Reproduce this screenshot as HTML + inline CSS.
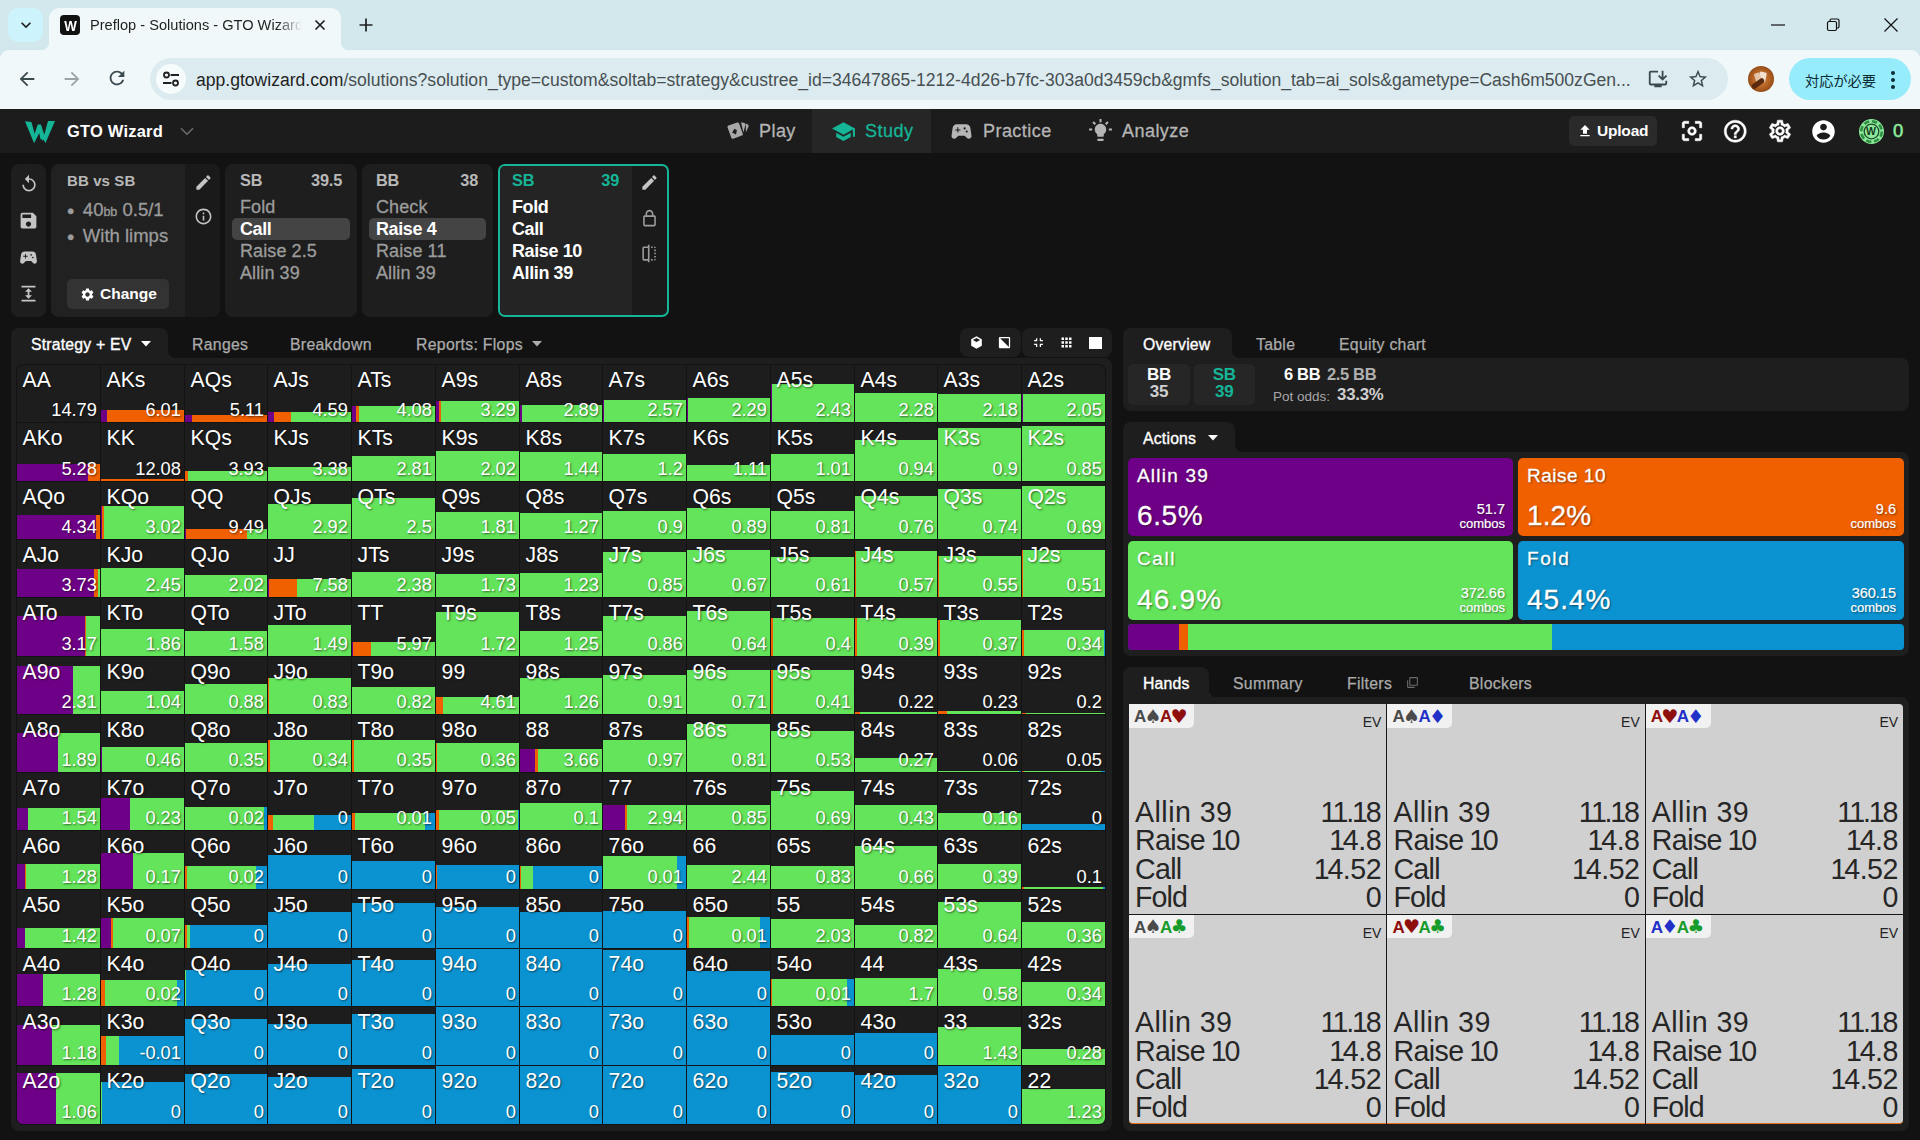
<!DOCTYPE html>
<html lang="en"><head><meta charset="utf-8"><title>Preflop - Solutions - GTO Wizard</title>
<style>
*{box-sizing:border-box;margin:0;padding:0}
html,body{width:1920px;height:1140px;overflow:hidden;background:#121212;font-family:"Liberation Sans","Noto Sans CJK JP",sans-serif;color:#fff}
.abs{position:absolute}
svg{display:block}
.t{position:absolute;white-space:nowrap;line-height:1}
.b{font-weight:700}
#chrome{position:absolute;left:0;top:0;width:1920px;height:109px;background:#d3e8ed}
#nav{position:absolute;left:0;top:109px;width:1920px;height:44px;background:#1c1c1c}
.card{position:absolute;background:#1e1e1e;border-radius:8px}
.g{position:absolute;width:82.8px;height:57.5px;background:#1d1d1d;overflow:hidden}
.g i{position:absolute;bottom:0;display:block}
.g b{position:absolute;left:5.6px;top:4.2px;font-weight:400;font-size:21.2px;line-height:22px;letter-spacing:0;color:#fff;text-shadow:1px 1px 2px rgba(0,0,0,.55)}
.g u{position:absolute;right:3.2px;bottom:2.6px;text-decoration:none;font-size:18.3px;line-height:19px;color:#fff;text-shadow:1px 1px 2px rgba(0,0,0,.55);letter-spacing:-.05px}
.act{position:absolute;border-radius:5px}
.act .n{position:absolute;left:9px;top:8px;font-size:19px;line-height:20px;letter-spacing:.6px;-webkit-text-stroke:.3px #fff;text-shadow:1px 1px 2px rgba(0,0,0,.5)}
.act .p{position:absolute;left:9px;bottom:6px;font-size:28px;line-height:28px;letter-spacing:.1px;-webkit-text-stroke:.3px #fff;text-shadow:1px 1px 2px rgba(0,0,0,.5)}
.act .c{position:absolute;right:8px;bottom:5px;font-size:13px;line-height:14px;text-align:right;-webkit-text-stroke:.2px #fff;text-shadow:1px 1px 2px rgba(0,0,0,.5)}
.act .c span{font-size:14.5px;line-height:16px;display:block}
.hc{position:absolute;width:257.4px;height:209.5px;background:#d0d0d0;color:#161616}
.hc .lab{position:absolute;left:0;top:0;width:65px;height:23.5px;background:#f1f1f1;border-bottom-right-radius:5px;font-weight:700;font-size:17px;line-height:23px;padding-left:5px;white-space:nowrap;letter-spacing:-.3px}
.hc .lab em{font-style:normal;font-weight:400;font-family:"DejaVu Sans",sans-serif;font-size:19px;letter-spacing:-1.5px;margin-left:-1.5px;position:relative;top:.5px}
.hc .ev{position:absolute;right:5px;top:10px;font-size:14px;line-height:16px;color:#222}
.hc .rows{position:absolute;left:6px;right:5.3px;bottom:1.3px;font-size:28.6px;line-height:28.3px;color:#262626;letter-spacing:0}
.hc .rows .o{margin:0 -1.7px}
.hc .rows .v{letter-spacing:-.5px}
.hc .rows div{display:flex;justify-content:space-between;white-space:nowrap}
</style></head><body>

<div id="chrome">
<div class="abs" style="left:8px;top:8px;width:35px;height:34px;border-radius:10px;background:#cdf4fc"></div>
<div class="abs" style="left:15.5px;top:15.0px;width:20px;height:20px"><svg width="20" height="20" viewBox="0 0 24 24" fill="#1f1f1f" ><path d="M16.59 8.59L12 13.17 7.41 8.59 6 10l6 6 6-6z"/></svg></div>
<div class="abs" style="left:49px;top:8px;width:292px;height:42px;border-radius:10px 10px 0 0;background:#f1f8fa"></div>
<div class="abs" style="left:41px;top:42px;width:8px;height:8px;background:radial-gradient(circle at 0 0,transparent 8px,#f1f8fa 8.5px)"></div>
<div class="abs" style="left:341px;top:42px;width:8px;height:8px;background:radial-gradient(circle at 100% 0,transparent 8px,#f1f8fa 8.5px)"></div>
<div class="abs" style="left:60px;top:15px;width:20px;height:20px;border-radius:4px;background:#111"></div>
<div class="t b" style="left:63.5px;top:18.5px;font-size:14px;color:#fff;letter-spacing:-.5px;transform:scaleX(.95)">W</div>
<div class="t" style="left:90px;top:18px;font-size:14.6px;color:#1f1f1f;width:212px;overflow:hidden;-webkit-mask-image:linear-gradient(90deg,#000 88%,transparent)">Preflop - Solutions - GTO Wizard</div>
<svg class="abs" style="left:313px;top:18px" width="14" height="14" viewBox="0 0 14 14"><path d="M2.500 2.500l9 9M11.500 2.500l-9 9" stroke="#1f1f1f" stroke-width="1.700" fill="none"/></svg>
<svg class="abs" style="left:358px;top:17px" width="16" height="16" viewBox="0 0 16 16"><path d="M8 1.500v13M1.500 8h13" stroke="#1f1f1f" stroke-width="1.700" fill="none"/></svg>
<svg class="abs" style="left:1770px;top:17px" width="16" height="16" viewBox="0 0 16 16"><path d="M1 8h14" stroke="#111" stroke-width="1.200"/></svg>
<svg class="abs" style="left:1825px;top:17px" width="16" height="16" viewBox="0 0 16 16"><rect x="2.500" y="4.500" width="9" height="9" rx="1.500" fill="none" stroke="#111" stroke-width="1.200"/><path d="M5 4.500V3.500a1.500 1.500 0 0 1 1.500-1.500h6a1.500 1.500 0 0 1 1.500 1.500v6a1.500 1.500 0 0 1-1.500 1.500h-1" fill="none" stroke="#111" stroke-width="1.200"/></svg>
<svg class="abs" style="left:1883px;top:17px" width="16" height="16" viewBox="0 0 16 16"><path d="M1.500 1.500l13 13M14.500 1.500l-13 13" stroke="#111" stroke-width="1.200"/></svg>
<div class="abs" style="left:0;top:50px;width:1920px;height:59px;background:#f1f8fa;border-radius:9px 9px 0 0"></div>
<div class="abs" style="left:16.0px;top:68.0px;width:22px;height:22px"><svg width="22" height="22" viewBox="0 0 24 24" fill="#3b4a4f" ><path d="M20 11H7.83l5.59-5.59L12 4l-8 8 8 8 1.41-1.41L7.83 13H20v-2z"/></svg></div>
<div class="abs" style="left:61.0px;top:68.0px;width:22px;height:22px"><svg width="22" height="22" viewBox="0 0 24 24" fill="#9aa3a6" ><path d="M12 4l-1.41 1.41L16.17 11H4v2h12.17l-5.58 5.59L12 20l8-8z"/></svg></div>
<div class="abs" style="left:106.0px;top:67.0px;width:22px;height:22px"><svg width="22" height="22" viewBox="0 0 24 24" fill="#3b4a4f" ><path d="M17.65 6.35C16.2 4.9 14.21 4 12 4c-4.42 0-7.99 3.58-7.99 8s3.57 8 7.99 8c3.73 0 6.84-2.55 7.73-6h-2.08c-.82 2.33-3.04 4-5.65 4-3.31 0-6-2.69-6-6s2.69-6 6-6c1.66 0 3.14.69 4.22 1.78L13 11h7V4l-2.35 2.35z"/></svg></div>
<div class="abs" style="left:150px;top:58px;width:1578px;height:42px;border-radius:21px;background:#dcebef"></div>
<div class="abs" style="left:156px;top:64px;width:30px;height:30px;border-radius:15px;background:#f6fbfc"></div>
<svg class="abs" style="left:161px;top:69px" width="20" height="20" viewBox="0 0 20 20" fill="none" stroke="#222" stroke-width="1.800"><path d="M9.500 6h8.500M2 14h8.500"/><circle cx="5.500" cy="6" r="2.500"/><circle cx="14.500" cy="14" r="2.500"/></svg>
<div class="t" style="left:196px;top:71.5px;font-size:17.57px;color:#1f1f1f" id="url">app.gtowizard.com<span style="color:#474f52">/solutions?solution_type=custom&amp;soltab=strategy&amp;custree_id=34647865-1212-4d26-b7fc-303a0d3459cb&amp;gmfs_solution_tab=ai_sols&amp;gametype=Cash6m500zGen...</span></div>
<div class="abs" style="left:1647.0px;top:68.0px;width:22px;height:22px"><svg width="22" height="22" viewBox="0 0 24 24" fill="#3b4a4f" ><path d="M20 17H4V5h8V3H4c-1.1 0-2 .9-2 2v12c0 1.1.9 2 2 2h4v2h8v-2h4c1.1 0 2-.9 2-2v-3h-2v3zM17 14l5-5-1.410-1.410L18 10.170V3h-2v7.170l-2.590-2.580L12 9z"/></svg></div>
<div class="abs" style="left:1687.0px;top:68.0px;width:22px;height:22px"><svg width="22" height="22" viewBox="0 0 24 24" fill="#3b4a4f" ><path d="M22 9.24l-7.19-.62L12 2 9.19 8.63 2 9.24l5.46 4.73L5.82 21 12 17.27 18.18 21l-1.63-7.03L22 9.24zM12 15.4l-3.76 2.27 1-4.28-3.32-2.88 4.38-.38L12 6.1l1.71 4.04 4.38.38-3.32 2.88 1 4.28L12 15.4z"/></svg></div>
<div class="abs" style="left:1748px;top:66px;width:26px;height:26px;border-radius:13px;background:radial-gradient(circle at 50% 50%,#d98a45 0,#b05e20 50%,#6b3512 100%);overflow:hidden"><div class="abs" style="left:11px;top:6px;width:7px;height:10px;background:#f3e1cf;border-radius:1px;transform:rotate(12deg)"></div><div class="abs" style="left:7px;top:7px;width:6px;height:9px;background:#e2c3a6;border-radius:1px;transform:rotate(-18deg)"></div><div class="abs" style="left:3px;top:15px;width:14px;height:5px;background:#5a2a0e;border-radius:2px;transform:rotate(-35deg)"></div></div>
<div class="abs" style="left:1789px;top:58px;width:122px;height:42px;border-radius:21px;background:#97ecfc"></div>
<div class="t" style="left:1805px;top:73.500px;font-size:14.2px;color:#0b2b33">対応が必要</div>
<svg class="abs" style="left:1889.500px;top:69px" width="6" height="22" viewBox="0 0 6 22" fill="#0b2b33"><circle cx="3" cy="4" r="2"/><circle cx="3" cy="11" r="2"/><circle cx="3" cy="18" r="2"/></svg>
</div>
<div id="nav">
<svg class="abs" style="left:25px;top:11.500px" width="30" height="23" viewBox="0 0 30 23"><path d="M0 .3L6.400 1l3.300 11.800L12.700 3.400h3.200l3.400 10.400L23 0h7L20.400 22.300l-1.600-3.600-1.300 1-.6-1.800-1.200.8-1.500-6.400L9.100 22.300z" fill="#15b597"/></svg>
<div class="t b" style="left:67px;top:14px;font-size:16.5px;color:#fff;letter-spacing:.2px">GTO Wizard</div>
<svg class="abs" style="left:179.500px;top:18px" width="14" height="9" viewBox="0 0 14 9"><path d="M1 1.200l6 6 6-6" fill="none" stroke="#6c6c6c" stroke-width="1.600"/></svg>
<div class="abs" style="left:812px;top:0;width:119px;height:44px;background:#262626"></div>
<div class="abs" style="left:726.0px;top:9.0px;width:24px;height:24px"><svg width="24" height="24" viewBox="0 0 24 24" fill="#a8a8a8" ><path d="M2.5 7.600l8.700-3.100c.8-.3 1.600.1 1.900.9l3.700 10.300c.3.8-.1 1.600-.9 1.900l-8.700 3.100c-.8.300-1.600-.1-1.900-.9L1.600 9.500c-.3-.8.100-1.600.9-1.900zm6 3.200l-2.400 3.800 3.900 2 .9-4.300zM15 4.200l3.300.9c.8.2 1.300 1 1.100 1.900l-2 7.600zM19.800 5.600l2 .9c.7.300 1 1.200.7 1.900l-2.600 6z"/></svg></div>
<div class="t" style="left:759px;top:13px;font-size:18px;color:#b5b5b5;letter-spacing:.45px;-webkit-text-stroke:.3px #b5b5b5">Play</div>
<div class="abs" style="left:830.5px;top:9.5px;width:25px;height:25px"><svg width="25" height="25" viewBox="0 0 24 24" fill="#15b597" ><path d="M5 13.18v4L12 21l7-3.82v-4L12 17l-7-3.82zM12 3L1 9l11 6 9-4.91V17h2V9L12 3z"/></svg></div>
<div class="t" style="left:865px;top:13px;font-size:18px;color:#15b597;font-weight:500;-webkit-text-stroke:.3px #15b597;letter-spacing:.5px">Study</div>
<div class="abs" style="left:949.0px;top:9.5px;width:25px;height:25px"><svg width="25" height="25" viewBox="0 0 24 24" fill="#b5b5b5" ><path d="M21.58 16.09l-1.09-7.66C20.21 6.46 18.52 5 16.53 5H7.47C5.48 5 3.79 6.46 3.51 8.43l-1.09 7.66C2.2 17.63 3.39 19 4.94 19c.68 0 1.32-.27 1.8-.75L9 16h6l2.25 2.25c.48.48 1.13.75 1.8.75 1.56 0 2.75-1.37 2.53-2.91zM11 11H9v2H8v-2H6v-1h2V8h1v2h2v1zm4-1c-.55 0-1-.45-1-1s.45-1 1-1 1 .45 1 1-.45 1-1 1zm2 3c-.55 0-1-.45-1-1s.45-1 1-1 1 .45 1 1-.45 1-1 1z"/></svg></div>
<div class="t" style="left:983px;top:13px;font-size:18px;color:#b5b5b5;letter-spacing:.45px;-webkit-text-stroke:.3px #b5b5b5">Practice</div>
<div class="abs" style="left:1088.0px;top:8.5px;width:25px;height:25px"><svg width="25" height="25" viewBox="0 0 24 24" fill="#b5b5b5" ><path d="M9 21c0 .55.45 1 1 1h4c.55 0 1-.45 1-1v-1H9v1zM12 5.5c-3.04 0-5.5 2.46-5.5 5.5 0 1.87.93 3.51 2.36 4.5V17c0 .55.45 1 1 1h4.28c.55 0 1-.45 1-1v-1.5c1.43-.99 2.36-2.63 2.36-4.5 0-3.04-2.46-5.5-5.5-5.5zM11 1h2v3h-2zM1 10h3v2H1zM20 10h3v2h-3zM4.2 4.6l1.4-1.4 2.1 2.1-1.4 1.4zM16.3 5.3l2.1-2.1 1.4 1.4-2.1 2.1z"/></svg></div>
<div class="t" style="left:1122px;top:13px;font-size:18px;color:#b5b5b5;letter-spacing:.45px;-webkit-text-stroke:.3px #b5b5b5">Analyze</div>
<div class="abs" style="left:1569px;top:7px;width:88px;height:30px;border-radius:5px;background:#2a2a2a"></div>
<div class="abs" style="left:1576.5px;top:13.5px;width:16px;height:16px"><svg width="16" height="16" viewBox="0 0 24 24" fill="#fff" ><path d="M9 16h6v-6h4l-7-7-7 7h4zm-4 2h14v2H5z"/></svg></div>
<div class="t b" style="left:1597px;top:14px;font-size:15.5px;color:#fff;letter-spacing:-.2px">Upload</div>
<div class="abs" style="left:1678.5px;top:9.0px;width:26px;height:26px"><svg width="26" height="26" viewBox="0 0 24 24" fill="#fff" stroke="#fff" stroke-width="0.5"><path d="M5 15H3v4c0 1.1.9 2 2 2h4v-2H5v-4zM5 5h4V3H5c-1.1 0-2 .9-2 2v4h2V5zm14-2h-4v2h4v4h2V5c0-1.1-.9-2-2-2zm0 16h-4v2h4c1.1 0 2-.9 2-2v-4h-2v4zM12 8c-2.21 0-4 1.79-4 4s1.79 4 4 4 4-1.79 4-4-1.79-4-4-4zm0 6c-1.1 0-2-.9-2-2s.9-2 2-2 2 .9 2 2-.9 2-2 2z"/></svg></div>
<div class="abs" style="left:1722.2px;top:8.8px;width:26.5px;height:26.5px"><svg width="26.5" height="26.5" viewBox="0 0 24 24" fill="#fff" stroke="#fff" stroke-width="0.4"><path d="M11 18h2v-2h-2v2zm1-16C6.48 2 2 6.48 2 12s4.48 10 10 10 10-4.48 10-10S17.52 2 12 2zm0 18c-4.41 0-8-3.59-8-8s3.59-8 8-8 8 3.59 8 8-3.59 8-8 8zm0-14c-2.21 0-4 1.79-4 4h2c0-1.1.9-2 2-2s2 .9 2 2c0 2-3 1.75-3 5h2c0-2.25 3-2.5 3-5 0-2.21-1.79-4-4-4z"/></svg></div>
<div class="abs" style="left:1766.5px;top:9.0px;width:26px;height:26px"><svg width="26" height="26" viewBox="0 0 24 24" fill="#fff" stroke="#fff" stroke-width="0.5"><path d="M19.43 12.98c.04-.32.07-.64.07-.98 0-.34-.03-.66-.07-.98l2.11-1.65c.19-.15.24-.42.12-.64l-2-3.46c-.09-.16-.26-.25-.44-.25-.06 0-.12.01-.17.03l-2.49 1c-.52-.4-1.08-.73-1.69-.98l-.38-2.65C14.46 2.18 14.25 2 14 2h-4c-.25 0-.46.18-.49.42l-.38 2.65c-.61.25-1.17.59-1.69.98l-2.49-1c-.06-.02-.12-.03-.18-.03-.17 0-.34.09-.43.25l-2 3.46c-.13.22-.07.49.12.64l2.11 1.65c-.04.32-.07.65-.07.98 0 .33.03.66.07.98l-2.11 1.65c-.19.15-.24.42-.12.64l2 3.46c.09.16.26.25.44.25.06 0 .12-.01.17-.03l2.49-1c.52.4 1.08.73 1.69.98l.38 2.65c.03.24.24.42.49.42h4c.25 0 .46-.18.49-.42l.38-2.65c.61-.25 1.17-.59 1.69-.98l2.49 1c.06.02.12.03.18.03.17 0 .34-.09.43-.25l2-3.46c.12-.22.07-.49-.12-.64l-2.11-1.65zm-1.98-1.71c.04.31.05.52.05.73 0 .21-.02.43-.05.73l-.14 1.13.89.7 1.08.84-.7 1.21-1.27-.51-1.04-.42-.9.68c-.43.32-.84.56-1.25.73l-1.06.43-.16 1.13-.2 1.35h-1.4l-.19-1.35-.16-1.13-1.06-.43c-.43-.18-.83-.41-1.23-.71l-.91-.7-1.06.43-1.27.51-.7-1.21 1.08-.84.89-.7-.14-1.13c-.03-.31-.05-.54-.05-.74s.02-.43.05-.73l.14-1.13-.89-.7-1.08-.84.7-1.21 1.27.51 1.04.42.9-.68c.43-.32.84-.56 1.25-.73l1.06-.43.16-1.13.2-1.35h1.39l.19 1.35.16 1.13 1.06.43c.43.18.83.41 1.23.71l.91.7 1.06-.43 1.27-.51.7 1.21-1.07.85-.89.7.14 1.13zM12 8c-2.21 0-4 1.79-4 4s1.79 4 4 4 4-1.79 4-4-1.79-4-4-4zm0 6c-1.1 0-2-.9-2-2s.9-2 2-2 2 .9 2 2-.9 2-2 2z"/></svg></div>
<div class="abs" style="left:1810.0px;top:8.5px;width:27px;height:27px"><svg width="27" height="27" viewBox="0 0 24 24" fill="#fff" ><path d="M12 2C6.48 2 2 6.48 2 12s4.48 10 10 10 10-4.48 10-10S17.52 2 12 2zm0 3c1.66 0 3 1.34 3 3s-1.34 3-3 3-3-1.34-3-3 1.34-3 3-3zm0 14.2c-2.5 0-4.71-1.28-6-3.22.03-1.99 4-3.08 6-3.08 1.99 0 5.97 1.09 6 3.08-1.29 1.94-3.5 3.22-6 3.22z"/></svg></div>
<svg class="abs" style="left:1857.500px;top:8.500px" width="27" height="27" viewBox="0 0 27 27"><circle cx="13.500" cy="13.500" r="12.500" fill="#8fe99c"/><circle cx="13.500" cy="13.500" r="10.300" fill="none" stroke="#2f8f43" stroke-width="2.600" stroke-dasharray="5.400 2.700"/><circle cx="13.500" cy="13.500" r="7.300" fill="#8fe99c" stroke="#1c4a27" stroke-width="1.300"/></svg>
<div class="t b" style="left:1866px;top:17px;font-size:10.5px;color:#143a1e;letter-spacing:-.3px">W</div>
<div class="t" style="left:1893px;top:13px;font-size:18.5px;color:#8fee9f;-webkit-text-stroke:.5px #8fee9f">0</div>
</div>
<div class="card" style="left:11px;top:164px;width:35px;height:153px"></div>
<div class="abs" style="left:18.5px;top:174.0px;width:20px;height:20px"><svg width="20" height="20" viewBox="0 0 24 24" fill="#c4c4c4" ><path d="M12 5V1L7 6l5 5V7c3.31 0 6 2.69 6 6s-2.69 6-6 6-6-2.69-6-6H4c0 4.42 3.58 8 8 8s8-3.58 8-8-3.58-8-8-8z"/></svg></div>
<div class="abs" style="left:18.0px;top:209.5px;width:21px;height:21px"><svg width="21" height="21" viewBox="0 0 24 24" fill="#c4c4c4" ><path d="M17 3H5c-1.11 0-2 .9-2 2v14c0 1.1.89 2 2 2h14c1.1 0 2-.9 2-2V7l-4-4zm-5 16c-1.66 0-3-1.34-3-3s1.34-3 3-3 3 1.34 3 3-1.34 3-3 3zm3-10H5V5h10v4z"/></svg></div>
<div class="abs" style="left:18.0px;top:246.5px;width:21px;height:21px"><svg width="21" height="21" viewBox="0 0 24 24" fill="#c4c4c4" ><path d="M21.58 16.09l-1.09-7.66C20.21 6.46 18.52 5 16.53 5H7.47C5.48 5 3.79 6.46 3.51 8.43l-1.09 7.66C2.2 17.63 3.39 19 4.94 19c.68 0 1.32-.27 1.8-.75L9 16h6l2.25 2.25c.48.48 1.13.75 1.8.75 1.56 0 2.75-1.37 2.53-2.91zM11 11H9v2H8v-2H6v-1h2V8h1v2h2v1zm4-1c-.55 0-1-.45-1-1s.45-1 1-1 1 .45 1 1-.45 1-1 1zm2 3c-.55 0-1-.45-1-1s.45-1 1-1 1 .45 1 1-.45 1-1 1z"/></svg></div>
<div class="abs" style="left:18.0px;top:282.5px;width:21px;height:21px"><svg width="21" height="21" viewBox="0 0 24 24" fill="#c4c4c4" ><path d="M4 3h16v2H4zM4 19h16v2H4zM12 6l-4 4h3v4H8l4 4 4-4h-3v-4h3z"/></svg></div>
<div class="card" style="left:51px;top:164px;width:169px;height:153px;background:#1a1a1a"></div>
<div class="card" style="left:51px;top:164px;width:134px;height:153px;background:#212121;border-radius:8px 0 0 8px"></div>
<div class="t b" style="left:67px;top:173px;font-size:15px;color:#b8b8b8;letter-spacing:.1px">BB vs SB</div>
<div class="t" style="left:67px;top:201px;font-size:18.5px;color:#9c9c9c;-webkit-text-stroke:.3px #9c9c9c"><span style="font-size:21px;line-height:10px;position:relative;top:1.5px">•</span>&nbsp;<span style="font-size:12px"> </span>40<span style="font-size:12.5px">bb</span> 0.5/1</div>
<div class="t" style="left:67px;top:227px;font-size:18.5px;color:#9c9c9c;-webkit-text-stroke:.3px #9c9c9c"><span style="font-size:21px;line-height:10px;position:relative;top:1.5px">•</span>&nbsp;<span style="font-size:12px"> </span>With limps</div>
<div class="abs" style="left:67px;top:279px;width:102px;height:30px;border-radius:5px;background:#333"></div>
<div class="abs" style="left:79.5px;top:286.5px;width:15px;height:15px"><svg width="15" height="15" viewBox="0 0 24 24" fill="#fff" ><path d="M19.14 12.94c.04-.3.06-.61.06-.94 0-.32-.02-.64-.07-.94l2.03-1.58c.18-.14.23-.41.12-.61l-1.92-3.32c-.12-.22-.37-.29-.59-.22l-2.39.96c-.5-.38-1.03-.7-1.62-.94l-.36-2.54c-.04-.24-.24-.41-.48-.41h-3.84c-.24 0-.43.17-.47.41l-.36 2.54c-.59.24-1.13.57-1.62.94l-2.39-.96c-.22-.08-.47 0-.59.22L2.74 8.87c-.12.21-.08.47.12.61l2.03 1.58c-.05.3-.09.63-.09.94s.02.64.07.94l-2.03 1.58c-.18.14-.23.41-.12.61l1.92 3.32c.12.22.37.29.59.22l2.39-.96c.5.38 1.03.7 1.62.94l.36 2.54c.05.24.24.41.48.41h3.84c.24 0 .44-.17.47-.41l.36-2.54c.59-.24 1.13-.56 1.62-.94l2.39.96c.22.08.47 0 .59-.22l1.92-3.32c.12-.22.07-.47-.12-.61l-2.01-1.58zM12 15.6c-1.98 0-3.6-1.62-3.6-3.6s1.62-3.6 3.6-3.6 3.6 1.62 3.6 3.6-1.62 3.6-3.6 3.6z"/></svg></div>
<div class="t b" style="left:100px;top:286px;font-size:15.5px;color:#fff">Change</div>
<div class="abs" style="left:193.5px;top:173.0px;width:19px;height:19px"><svg width="19" height="19" viewBox="0 0 24 24" fill="#c4c4c4" ><path d="M3 17.25V21h3.75L17.81 9.94l-3.75-3.75L3 17.25zM20.71 7.04c.39-.39.39-1.02 0-1.41l-2.34-2.34c-.39-.39-1.02-.39-1.41 0l-1.83 1.83 3.75 3.75 1.83-1.83z"/></svg></div>
<div class="abs" style="left:193.5px;top:206.5px;width:19px;height:19px"><svg width="19" height="19" viewBox="0 0 24 24" fill="#c4c4c4" ><path d="M11 7h2v2h-2zm0 4h2v6h-2zm1-9C6.48 2 2 6.48 2 12s4.48 10 10 10 10-4.48 10-10S17.52 2 12 2zm0 18c-4.41 0-8-3.59-8-8s3.59-8 8-8 8 3.59 8 8-3.59 8-8 8z"/></svg></div>
<div class="card" style="left:225px;top:164px;width:132px;height:153px"></div>
<div class="t b" style="left:240px;top:172px;font-size:16.3px;color:#b8b8b8;letter-spacing:-.2px">SB</div>
<div class="t b" style="right:1578px;top:172px;font-size:16.3px;color:#b8b8b8;letter-spacing:-.2px">39.5</div>
<div class="t" style="left:240px;top:198px;font-size:18px;color:#9c9c9c;-webkit-text-stroke:.3px #9c9c9c;letter-spacing:.1px">Fold</div>
<div class="abs" style="left:232px;top:218px;width:118px;height:22px;border-radius:5px;background:#444"></div>
<div class="t b" style="left:240px;top:220px;font-size:18px;color:#fff;letter-spacing:-.4px">Call</div>
<div class="t" style="left:240px;top:242px;font-size:18px;color:#9c9c9c;-webkit-text-stroke:.3px #9c9c9c;letter-spacing:.1px">Raise 2.5</div>
<div class="t" style="left:240px;top:264px;font-size:18px;color:#9c9c9c;-webkit-text-stroke:.3px #9c9c9c;letter-spacing:.1px">Allin 39</div>
<div class="card" style="left:362px;top:164px;width:131px;height:153px"></div>
<div class="t b" style="left:376px;top:172px;font-size:16.3px;color:#b8b8b8;letter-spacing:-.2px">BB</div>
<div class="t b" style="right:1442px;top:172px;font-size:16.3px;color:#b8b8b8;letter-spacing:-.2px">38</div>
<div class="t" style="left:376px;top:198px;font-size:18px;color:#9c9c9c;-webkit-text-stroke:.3px #9c9c9c;letter-spacing:.1px">Check</div>
<div class="abs" style="left:369px;top:218px;width:117px;height:22px;border-radius:5px;background:#444"></div>
<div class="t b" style="left:376px;top:220px;font-size:18px;color:#fff;letter-spacing:-.4px">Raise 4</div>
<div class="t" style="left:376px;top:242px;font-size:18px;color:#9c9c9c;-webkit-text-stroke:.3px #9c9c9c;letter-spacing:.1px">Raise 11</div>
<div class="t" style="left:376px;top:264px;font-size:18px;color:#9c9c9c;-webkit-text-stroke:.3px #9c9c9c;letter-spacing:.1px">Allin 39</div>
<div class="abs" style="left:498px;top:164px;width:171px;height:153px;border:2px solid #15b597;border-radius:7px;background:#1a1a1a"></div>
<div class="abs" style="left:500px;top:166px;width:132px;height:149px;background:#242424;border-radius:5px 0 0 5px"></div>
<div class="t b" style="left:512px;top:172px;font-size:16.3px;letter-spacing:-.2px;color:#15b597">SB</div>
<div class="t b" style="right:1301px;top:172px;font-size:16.3px;letter-spacing:-.2px;color:#15b597">39</div>
<div class="t b" style="left:512px;top:198px;font-size:18px;color:#fff;letter-spacing:-.4px">Fold</div>
<div class="t b" style="left:512px;top:220px;font-size:18px;color:#fff;letter-spacing:-.4px">Call</div>
<div class="t b" style="left:512px;top:242px;font-size:18px;color:#fff;letter-spacing:-.4px">Raise 10</div>
<div class="t b" style="left:512px;top:264px;font-size:18px;color:#fff;letter-spacing:-.4px">Allin 39</div>
<div class="abs" style="left:640.0px;top:173.0px;width:19px;height:19px"><svg width="19" height="19" viewBox="0 0 24 24" fill="#c4c4c4" ><path d="M3 17.25V21h3.75L17.81 9.94l-3.75-3.75L3 17.25zM20.71 7.04c.39-.39.39-1.02 0-1.41l-2.34-2.34c-.39-.39-1.02-.39-1.41 0l-1.83 1.83 3.75 3.75 1.83-1.83z"/></svg></div>
<div class="abs" style="left:640.0px;top:208.5px;width:19px;height:19px"><svg width="19" height="19" viewBox="0 0 24 24" fill="#9c9c9c" ><path d="M18 8h-1V6c0-2.76-2.24-5-5-5S7 3.24 7 6v2H6c-1.1 0-2 .9-2 2v10c0 1.1.9 2 2 2h12c1.1 0 2-.9 2-2V10c0-1.1-.9-2-2-2zM9 6c0-1.66 1.34-3 3-3s3 1.34 3 3v2H9V6zm9 14H6V10h12v10z"/></svg></div>
<div class="abs" style="left:640.0px;top:244.0px;width:19px;height:19px"><svg width="19" height="19" viewBox="0 0 24 24" fill="#9c9c9c" ><path d="M10 3H5c-1.1 0-2 .9-2 2v14c0 1.1.9 2 2 2h5v2h2V1h-2v2zm0 16H5V5h5v14zM14 3h2v2h-2zM14 19h2v2h-2zM18 3v2h2c0-1.1-.9-2-2-2zM18 19v2c1.1 0 2-.9 2-2h-2zM18 7h2v2h-2zM18 11h2v2h-2zM18 15h2v2h-2z"/></svg></div>
<div class="abs" style="left:11px;top:328px;width:157px;height:32px;background:#1e1e1e;border-radius:8px 8px 0 0"></div>
<div class="abs" style="left:168px;top:350px;width:8px;height:8px;background:radial-gradient(circle at 100% 0,transparent 8px,#1e1e1e 8.5px)"></div>
<div class="t" style="left:31px;top:336px;font-size:15.8px;color:#fff;-webkit-text-stroke:.35px #fff;letter-spacing:.2px;margin-top:1.3px">Strategy + EV</div>
<svg class="abs" style="left:141px;top:341px" width="10" height="6" viewBox="0 0 10 6"><path d="M0 0h10L5 5.500z" fill="#fff"/></svg>
<div class="t" style="left:192px;top:336px;font-size:15.8px;color:#ababab;-webkit-text-stroke:.25px #ababab;letter-spacing:.3px;margin-top:1.3px">Ranges</div>
<div class="t" style="left:290px;top:336px;font-size:15.8px;color:#ababab;-webkit-text-stroke:.25px #ababab;letter-spacing:.3px;margin-top:1.3px">Breakdown</div>
<div class="t" style="left:416px;top:336px;font-size:15.8px;color:#ababab;-webkit-text-stroke:.25px #ababab;letter-spacing:.3px;margin-top:1.3px">Reports: Flops</div>
<svg class="abs" style="left:532px;top:341px" width="10" height="6" viewBox="0 0 10 6"><path d="M0 0h10L5 5.500z" fill="#ababab"/></svg>
<div class="abs" style="left:960px;top:328px;width:61px;height:29px;border-radius:8px;background:#1e1e1e"></div>
<div class="abs" style="left:1022px;top:328px;width:90px;height:29px;border-radius:8px;background:#1e1e1e"></div>
<div class="abs" style="left:968.5px;top:335.0px;width:15px;height:15px"><svg width="15" height="15" viewBox="0 0 24 24" fill="#fff" ><path d="M12 2L3.5 6.8v10.4L12 22l8.500-4.8V6.800zM12 4.600l5.700 3.200L12 11 6.300 7.800z"/></svg></div>
<div class="abs" style="left:996.5px;top:335.0px;width:15px;height:15px"><svg width="15" height="15" viewBox="0 0 24 24" fill="#fff" ><path d="M19 3H5c-1.1 0-2 .9-2 2v14c0 1.1.9 2 2 2h14c1.1 0 2-.9 2-2V5c0-1.1-.9-2-2-2zm0 16L5 5h14v14z"/></svg></div>
<div class="abs" style="left:1031.0px;top:335.0px;width:15px;height:15px"><svg width="15" height="15" viewBox="0 0 24 24" fill="#fff" ><path d="M5 16h3v3h2v-5H5v2zm3-8H5v2h5V5H8v3zm6 11h2v-3h3v-2h-5v5zm2-11V5h-2v5h5V8h-3z"/></svg></div>
<div class="abs" style="left:1059.0px;top:335.0px;width:15px;height:15px"><svg width="15" height="15" viewBox="0 0 24 24" fill="#fff" ><path d="M4 8h4V4H4v4zm6 12h4v-4h-4v4zm-6 0h4v-4H4v4zm0-6h4v-4H4v4zm6 0h4v-4h-4v4zm6-10v4h4V4h-4zm-6 4h4V4h-4v4zm6 6h4v-4h-4v4zm0 6h4v-4h-4v4z"/></svg></div>
<div class="abs" style="left:1089px;top:336.500px;width:12.500px;height:12.500px;background:#fff"></div>
<div class="abs" style="left:11px;top:358px;width:1100.5px;height:772.5px;background:#1e1e1e;border-radius:0 8px 8px 8px"></div>
<div class="abs" style="left:16px;top:364px;width:1090px;height:761px;background:#131313;border-radius:7px"></div>
<div class="g" style="left:17px;top:365px;width:83px;height:57px;border-top-left-radius:6px;"><b>AA</b><u>14.79</u></div>
<div class="g" style="left:101px;top:365px;width:83px;height:57px;"><i style="left:0.00%;width:7.05%;height:12.0px;background:#6e0087"></i><i style="left:7.00%;width:93.05%;height:12.0px;background:#f06000"></i><b>AKs</b><u>6.01</u></div>
<div class="g" style="left:185px;top:365px;width:82px;height:57px;"><i style="left:0.00%;width:8.05%;height:7.0px;background:#6e0087"></i><i style="left:8.00%;width:92.05%;height:7.0px;background:#f06000"></i><b>AQs</b><u>5.11</u></div>
<div class="g" style="left:268px;top:365px;width:83px;height:57px;"><i style="left:0.00%;width:7.05%;height:10.0px;background:#6e0087"></i><i style="left:7.00%;width:21.05%;height:10.0px;background:#f06000"></i><i style="left:28.00%;width:72.05%;height:10.0px;background:#64e45a"></i><b>AJs</b><u>4.59</u></div>
<div class="g" style="left:352px;top:365px;width:83px;height:57px;"><i style="left:0.00%;width:5.05%;height:16.0px;background:#6e0087"></i><i style="left:5.00%;width:3.05%;height:16.0px;background:#f06000"></i><i style="left:8.00%;width:92.05%;height:16.0px;background:#64e45a"></i><b>ATs</b><u>4.08</u></div>
<div class="g" style="left:436px;top:365px;width:83px;height:57px;"><i style="left:0.00%;width:3.55%;height:21.0px;background:#6e0087"></i><i style="left:3.50%;width:2.55%;height:21.0px;background:#f06000"></i><i style="left:6.00%;width:94.05%;height:21.0px;background:#64e45a"></i><b>A9s</b><u>3.29</u></div>
<div class="g" style="left:520px;top:365px;width:82px;height:57px;"><i style="left:0.00%;width:2.05%;height:17.5px;background:#6e0087"></i><i style="left:2.00%;width:98.05%;height:17.5px;background:#64e45a"></i><b>A8s</b><u>2.89</u></div>
<div class="g" style="left:603px;top:365px;width:83px;height:57px;"><i style="left:0.00%;width:1.05%;height:22.0px;background:#6e0087"></i><i style="left:1.00%;width:99.05%;height:22.0px;background:#64e45a"></i><b>A7s</b><u>2.57</u></div>
<div class="g" style="left:687px;top:365px;width:83px;height:57px;"><i style="left:0.00%;width:0.75%;height:24.0px;background:#6e0087"></i><i style="left:0.70%;width:99.35%;height:24.0px;background:#64e45a"></i><b>A6s</b><u>2.29</u></div>
<div class="g" style="left:771px;top:365px;width:83px;height:57px;"><i style="left:0.00%;width:0.75%;height:38.0px;background:#6e0087"></i><i style="left:0.70%;width:99.35%;height:38.0px;background:#64e45a"></i><b>A5s</b><u>2.43</u></div>
<div class="g" style="left:855px;top:365px;width:82px;height:57px;"><i style="left:0.00%;width:0.55%;height:29.0px;background:#6e0087"></i><i style="left:0.50%;width:99.55%;height:29.0px;background:#64e45a"></i><b>A4s</b><u>2.28</u></div>
<div class="g" style="left:938px;top:365px;width:83px;height:57px;"><i style="left:0.00%;width:0.55%;height:28.0px;background:#6e0087"></i><i style="left:0.50%;width:99.55%;height:28.0px;background:#64e45a"></i><b>A3s</b><u>2.18</u></div>
<div class="g" style="left:1022px;top:365px;width:83px;height:57px;border-top-right-radius:6px;"><i style="left:0.00%;width:0.75%;height:28.0px;background:#6e0087"></i><i style="left:0.70%;width:99.35%;height:28.0px;background:#64e45a"></i><b>A2s</b><u>2.05</u></div>
<div class="g" style="left:17px;top:423px;width:83px;height:58px;"><i style="left:0.00%;width:85.05%;height:17.0px;background:#6e0087"></i><i style="left:85.00%;width:15.05%;height:17.0px;background:#f06000"></i><b>AKo</b><u>5.28</u></div>
<div class="g" style="left:101px;top:423px;width:83px;height:58px;"><i style="left:0.00%;width:100.05%;height:2.0px;background:#f06000"></i><b>KK</b><u>12.08</u></div>
<div class="g" style="left:185px;top:423px;width:82px;height:58px;"><i style="left:0.00%;width:4.05%;height:10.0px;background:#f06000"></i><i style="left:4.00%;width:96.05%;height:10.0px;background:#64e45a"></i><b>KQs</b><u>3.93</u></div>
<div class="g" style="left:268px;top:423px;width:83px;height:58px;"><i style="left:0.00%;width:100.05%;height:14.0px;background:#64e45a"></i><b>KJs</b><u>3.38</u></div>
<div class="g" style="left:352px;top:423px;width:83px;height:58px;"><i style="left:0.00%;width:100.05%;height:25.0px;background:#64e45a"></i><b>KTs</b><u>2.81</u></div>
<div class="g" style="left:436px;top:423px;width:83px;height:58px;"><i style="left:0.00%;width:100.05%;height:30.5px;background:#64e45a"></i><b>K9s</b><u>2.02</u></div>
<div class="g" style="left:520px;top:423px;width:82px;height:58px;"><i style="left:0.00%;width:100.05%;height:29.0px;background:#64e45a"></i><b>K8s</b><u>1.44</u></div>
<div class="g" style="left:603px;top:423px;width:83px;height:58px;"><i style="left:0.00%;width:100.05%;height:27.0px;background:#64e45a"></i><b>K7s</b><u>1.2</u></div>
<div class="g" style="left:687px;top:423px;width:83px;height:58px;"><i style="left:0.00%;width:100.05%;height:16.0px;background:#64e45a"></i><b>K6s</b><u>1.11</u></div>
<div class="g" style="left:771px;top:423px;width:83px;height:58px;"><i style="left:0.00%;width:100.05%;height:27.0px;background:#64e45a"></i><b>K5s</b><u>1.01</u></div>
<div class="g" style="left:855px;top:423px;width:82px;height:58px;"><i style="left:0.00%;width:100.05%;height:41.0px;background:#64e45a"></i><b>K4s</b><u>0.94</u></div>
<div class="g" style="left:938px;top:423px;width:83px;height:58px;"><i style="left:0.00%;width:100.05%;height:53.0px;background:#64e45a"></i><b>K3s</b><u>0.9</u></div>
<div class="g" style="left:1022px;top:423px;width:83px;height:58px;"><i style="left:0.00%;width:100.05%;height:55.0px;background:#64e45a"></i><b>K2s</b><u>0.85</u></div>
<div class="g" style="left:17px;top:482px;width:83px;height:57px;"><i style="left:0.00%;width:95.05%;height:24.0px;background:#6e0087"></i><i style="left:95.00%;width:5.05%;height:24.0px;background:#f06000"></i><b>AQo</b><u>4.34</u></div>
<div class="g" style="left:101px;top:482px;width:83px;height:57px;"><i style="left:0.00%;width:1.05%;height:33.0px;background:#6e0087"></i><i style="left:1.00%;width:2.55%;height:33.0px;background:#f06000"></i><i style="left:3.50%;width:96.55%;height:33.0px;background:#64e45a"></i><b>KQo</b><u>3.02</u></div>
<div class="g" style="left:185px;top:482px;width:82px;height:57px;"><i style="left:0.00%;width:1.05%;height:10.0px;background:#6e0087"></i><i style="left:1.00%;width:75.05%;height:10.0px;background:#f06000"></i><i style="left:76.00%;width:24.05%;height:10.0px;background:#64e45a"></i><b>QQ</b><u>9.49</u></div>
<div class="g" style="left:268px;top:482px;width:83px;height:57px;"><i style="left:0.00%;width:100.05%;height:35.0px;background:#64e45a"></i><b>QJs</b><u>2.92</u></div>
<div class="g" style="left:352px;top:482px;width:83px;height:57px;"><i style="left:0.00%;width:100.05%;height:41.0px;background:#64e45a"></i><b>QTs</b><u>2.5</u></div>
<div class="g" style="left:436px;top:482px;width:83px;height:57px;"><i style="left:0.00%;width:100.05%;height:27.0px;background:#64e45a"></i><b>Q9s</b><u>1.81</u></div>
<div class="g" style="left:520px;top:482px;width:82px;height:57px;"><i style="left:0.00%;width:100.05%;height:26.0px;background:#64e45a"></i><b>Q8s</b><u>1.27</u></div>
<div class="g" style="left:603px;top:482px;width:83px;height:57px;"><i style="left:0.00%;width:100.05%;height:28.0px;background:#64e45a"></i><b>Q7s</b><u>0.9</u></div>
<div class="g" style="left:687px;top:482px;width:83px;height:57px;"><i style="left:0.00%;width:100.05%;height:31.0px;background:#64e45a"></i><b>Q6s</b><u>0.89</u></div>
<div class="g" style="left:771px;top:482px;width:83px;height:57px;"><i style="left:0.00%;width:100.05%;height:28.0px;background:#64e45a"></i><b>Q5s</b><u>0.81</u></div>
<div class="g" style="left:855px;top:482px;width:82px;height:57px;"><i style="left:0.00%;width:100.05%;height:43.0px;background:#64e45a"></i><b>Q4s</b><u>0.76</u></div>
<div class="g" style="left:938px;top:482px;width:83px;height:57px;"><i style="left:0.00%;width:100.05%;height:50.5px;background:#64e45a"></i><b>Q3s</b><u>0.74</u></div>
<div class="g" style="left:1022px;top:482px;width:83px;height:57px;"><i style="left:0.00%;width:100.05%;height:53.0px;background:#64e45a"></i><b>Q2s</b><u>0.69</u></div>
<div class="g" style="left:17px;top:540px;width:83px;height:57px;"><i style="left:0.00%;width:93.05%;height:28.0px;background:#6e0087"></i><i style="left:93.00%;width:4.05%;height:28.0px;background:#f06000"></i><i style="left:97.00%;width:3.05%;height:28.0px;background:#64e45a"></i><b>AJo</b><u>3.73</u></div>
<div class="g" style="left:101px;top:540px;width:83px;height:57px;"><i style="left:0.00%;width:100.05%;height:29.0px;background:#64e45a"></i><b>KJo</b><u>2.45</u></div>
<div class="g" style="left:185px;top:540px;width:82px;height:57px;"><i style="left:0.00%;width:100.05%;height:22.0px;background:#64e45a"></i><b>QJo</b><u>2.02</u></div>
<div class="g" style="left:268px;top:540px;width:83px;height:57px;"><i style="left:0.00%;width:1.05%;height:18.0px;background:#6e0087"></i><i style="left:1.00%;width:34.05%;height:18.0px;background:#f06000"></i><i style="left:35.00%;width:65.05%;height:18.0px;background:#64e45a"></i><b>JJ</b><u>7.58</u></div>
<div class="g" style="left:352px;top:540px;width:83px;height:57px;"><i style="left:0.00%;width:100.05%;height:25.0px;background:#64e45a"></i><b>JTs</b><u>2.38</u></div>
<div class="g" style="left:436px;top:540px;width:83px;height:57px;"><i style="left:0.00%;width:100.05%;height:23.0px;background:#64e45a"></i><b>J9s</b><u>1.73</u></div>
<div class="g" style="left:520px;top:540px;width:82px;height:57px;"><i style="left:0.00%;width:100.05%;height:24.0px;background:#64e45a"></i><b>J8s</b><u>1.23</u></div>
<div class="g" style="left:603px;top:540px;width:83px;height:57px;"><i style="left:0.00%;width:100.05%;height:45.0px;background:#64e45a"></i><b>J7s</b><u>0.85</u></div>
<div class="g" style="left:687px;top:540px;width:83px;height:57px;"><i style="left:0.00%;width:100.05%;height:47.0px;background:#64e45a"></i><b>J6s</b><u>0.67</u></div>
<div class="g" style="left:771px;top:540px;width:83px;height:57px;"><i style="left:0.00%;width:100.05%;height:40.0px;background:#64e45a"></i><b>J5s</b><u>0.61</u></div>
<div class="g" style="left:855px;top:540px;width:82px;height:57px;"><i style="left:0.00%;width:1.05%;height:46.0px;background:#f06000"></i><i style="left:1.00%;width:99.05%;height:46.0px;background:#64e45a"></i><b>J4s</b><u>0.57</u></div>
<div class="g" style="left:938px;top:540px;width:83px;height:57px;"><i style="left:0.00%;width:1.05%;height:41.0px;background:#f06000"></i><i style="left:1.00%;width:99.05%;height:41.0px;background:#64e45a"></i><b>J3s</b><u>0.55</u></div>
<div class="g" style="left:1022px;top:540px;width:83px;height:57px;"><i style="left:0.00%;width:1.05%;height:47.0px;background:#f06000"></i><i style="left:1.00%;width:99.05%;height:47.0px;background:#64e45a"></i><b>J2s</b><u>0.51</u></div>
<div class="g" style="left:17px;top:598px;width:83px;height:58px;"><i style="left:0.00%;width:82.05%;height:40.0px;background:#6e0087"></i><i style="left:82.00%;width:1.55%;height:40.0px;background:#f06000"></i><i style="left:83.50%;width:16.55%;height:40.0px;background:#64e45a"></i><b>ATo</b><u>3.17</u></div>
<div class="g" style="left:101px;top:598px;width:83px;height:58px;"><i style="left:0.00%;width:100.05%;height:27.0px;background:#64e45a"></i><b>KTo</b><u>1.86</u></div>
<div class="g" style="left:185px;top:598px;width:82px;height:58px;"><i style="left:0.00%;width:100.05%;height:25.0px;background:#64e45a"></i><b>QTo</b><u>1.58</u></div>
<div class="g" style="left:268px;top:598px;width:83px;height:58px;"><i style="left:0.00%;width:100.05%;height:31.0px;background:#64e45a"></i><b>JTo</b><u>1.49</u></div>
<div class="g" style="left:352px;top:598px;width:83px;height:58px;"><i style="left:0.00%;width:1.55%;height:14.0px;background:#6e0087"></i><i style="left:1.50%;width:21.05%;height:14.0px;background:#f06000"></i><i style="left:22.50%;width:77.55%;height:14.0px;background:#64e45a"></i><b>TT</b><u>5.97</u></div>
<div class="g" style="left:436px;top:598px;width:83px;height:58px;"><i style="left:0.00%;width:100.05%;height:44.0px;background:#64e45a"></i><b>T9s</b><u>1.72</u></div>
<div class="g" style="left:520px;top:598px;width:82px;height:58px;"><i style="left:0.00%;width:100.05%;height:25.0px;background:#64e45a"></i><b>T8s</b><u>1.25</u></div>
<div class="g" style="left:603px;top:598px;width:83px;height:58px;"><i style="left:0.00%;width:100.05%;height:40.0px;background:#64e45a"></i><b>T7s</b><u>0.86</u></div>
<div class="g" style="left:687px;top:598px;width:83px;height:58px;"><i style="left:0.00%;width:100.05%;height:45.0px;background:#64e45a"></i><b>T6s</b><u>0.64</u></div>
<div class="g" style="left:771px;top:598px;width:83px;height:58px;"><i style="left:0.00%;width:2.05%;height:38.0px;background:#f06000"></i><i style="left:2.00%;width:98.05%;height:38.0px;background:#64e45a"></i><b>T5s</b><u>0.4</u></div>
<div class="g" style="left:855px;top:598px;width:82px;height:58px;"><i style="left:0.00%;width:2.55%;height:38.0px;background:#f06000"></i><i style="left:2.50%;width:97.55%;height:38.0px;background:#64e45a"></i><b>T4s</b><u>0.39</u></div>
<div class="g" style="left:938px;top:598px;width:83px;height:58px;"><i style="left:0.00%;width:3.05%;height:36.0px;background:#f06000"></i><i style="left:3.00%;width:97.05%;height:36.0px;background:#64e45a"></i><b>T3s</b><u>0.37</u></div>
<div class="g" style="left:1022px;top:598px;width:83px;height:58px;"><i style="left:0.00%;width:2.05%;height:26.0px;background:#f06000"></i><i style="left:2.00%;width:97.05%;height:26.0px;background:#64e45a"></i><i style="left:99.00%;width:1.05%;height:26.0px;background:#0b93d1"></i><b>T2s</b><u>0.34</u></div>
<div class="g" style="left:17px;top:657px;width:83px;height:57px;"><i style="left:0.00%;width:67.05%;height:48.0px;background:#6e0087"></i><i style="left:67.00%;width:0.55%;height:48.0px;background:#f06000"></i><i style="left:67.50%;width:32.55%;height:48.0px;background:#64e45a"></i><b>A9o</b><u>2.31</u></div>
<div class="g" style="left:101px;top:657px;width:83px;height:57px;"><i style="left:0.00%;width:100.05%;height:23.0px;background:#64e45a"></i><b>K9o</b><u>1.04</u></div>
<div class="g" style="left:185px;top:657px;width:82px;height:57px;"><i style="left:0.00%;width:0.55%;height:30.0px;background:#f06000"></i><i style="left:0.50%;width:99.55%;height:30.0px;background:#64e45a"></i><b>Q9o</b><u>0.88</u></div>
<div class="g" style="left:268px;top:657px;width:83px;height:57px;"><i style="left:0.00%;width:1.05%;height:36.0px;background:#f06000"></i><i style="left:1.00%;width:99.05%;height:36.0px;background:#64e45a"></i><b>J9o</b><u>0.83</u></div>
<div class="g" style="left:352px;top:657px;width:83px;height:57px;"><i style="left:0.00%;width:100.05%;height:27.0px;background:#64e45a"></i><b>T9o</b><u>0.82</u></div>
<div class="g" style="left:436px;top:657px;width:83px;height:57px;"><i style="left:0.00%;width:8.05%;height:17.0px;background:#f06000"></i><i style="left:8.00%;width:92.05%;height:17.0px;background:#64e45a"></i><b>99</b><u>4.61</u></div>
<div class="g" style="left:520px;top:657px;width:82px;height:57px;"><i style="left:0.00%;width:100.05%;height:36.0px;background:#64e45a"></i><b>98s</b><u>1.26</u></div>
<div class="g" style="left:603px;top:657px;width:83px;height:57px;"><i style="left:0.00%;width:100.05%;height:39.0px;background:#64e45a"></i><b>97s</b><u>0.91</u></div>
<div class="g" style="left:687px;top:657px;width:83px;height:57px;"><i style="left:0.00%;width:100.05%;height:44.0px;background:#64e45a"></i><b>96s</b><u>0.71</u></div>
<div class="g" style="left:771px;top:657px;width:83px;height:57px;"><i style="left:0.00%;width:2.05%;height:44.0px;background:#f06000"></i><i style="left:2.00%;width:98.05%;height:44.0px;background:#64e45a"></i><b>95s</b><u>0.41</u></div>
<div class="g" style="left:855px;top:657px;width:82px;height:57px;"><i style="left:0.00%;width:6.05%;height:2.0px;background:#f06000"></i><i style="left:6.00%;width:94.05%;height:2.0px;background:#64e45a"></i><b>94s</b><u>0.22</u></div>
<div class="g" style="left:938px;top:657px;width:83px;height:57px;"><i style="left:0.00%;width:11.05%;height:3.0px;background:#f06000"></i><i style="left:11.00%;width:89.05%;height:3.0px;background:#64e45a"></i><b>93s</b><u>0.23</u></div>
<div class="g" style="left:1022px;top:657px;width:83px;height:57px;"><i style="left:0.00%;width:5.05%;height:1.0px;background:#f06000"></i><i style="left:5.00%;width:95.05%;height:1.0px;background:#64e45a"></i><b>92s</b><u>0.2</u></div>
<div class="g" style="left:17px;top:715px;width:83px;height:57px;"><i style="left:0.00%;width:49.05%;height:39.0px;background:#6e0087"></i><i style="left:49.00%;width:51.05%;height:39.0px;background:#64e45a"></i><b>A8o</b><u>1.89</u></div>
<div class="g" style="left:101px;top:715px;width:83px;height:57px;"><i style="left:0.00%;width:1.05%;height:25.0px;background:#6e0087"></i><i style="left:1.00%;width:99.05%;height:25.0px;background:#64e45a"></i><b>K8o</b><u>0.46</u></div>
<div class="g" style="left:185px;top:715px;width:82px;height:57px;"><i style="left:0.00%;width:0.55%;height:29.0px;background:#f06000"></i><i style="left:0.50%;width:99.55%;height:29.0px;background:#64e45a"></i><b>Q8o</b><u>0.35</u></div>
<div class="g" style="left:268px;top:715px;width:83px;height:57px;"><i style="left:0.00%;width:3.05%;height:32.0px;background:#f06000"></i><i style="left:3.00%;width:97.05%;height:32.0px;background:#64e45a"></i><b>J8o</b><u>0.34</u></div>
<div class="g" style="left:352px;top:715px;width:83px;height:57px;"><i style="left:0.00%;width:2.05%;height:32.0px;background:#f06000"></i><i style="left:2.00%;width:98.05%;height:32.0px;background:#64e45a"></i><b>T8o</b><u>0.35</u></div>
<div class="g" style="left:436px;top:715px;width:83px;height:57px;"><i style="left:0.00%;width:1.05%;height:29.0px;background:#f06000"></i><i style="left:1.00%;width:99.05%;height:29.0px;background:#64e45a"></i><b>98o</b><u>0.36</u></div>
<div class="g" style="left:520px;top:715px;width:82px;height:57px;"><i style="left:0.00%;width:18.05%;height:23.0px;background:#6e0087"></i><i style="left:18.00%;width:4.55%;height:23.0px;background:#f06000"></i><i style="left:22.50%;width:77.55%;height:23.0px;background:#64e45a"></i><b>88</b><u>3.66</u></div>
<div class="g" style="left:603px;top:715px;width:83px;height:57px;"><i style="left:0.00%;width:100.05%;height:32.0px;background:#64e45a"></i><b>87s</b><u>0.97</u></div>
<div class="g" style="left:687px;top:715px;width:83px;height:57px;"><i style="left:0.00%;width:100.05%;height:48.0px;background:#64e45a"></i><b>86s</b><u>0.81</u></div>
<div class="g" style="left:771px;top:715px;width:83px;height:57px;"><i style="left:0.00%;width:100.05%;height:41.0px;background:#64e45a"></i><b>85s</b><u>0.53</u></div>
<div class="g" style="left:855px;top:715px;width:82px;height:57px;"><i style="left:0.00%;width:100.05%;height:14.0px;background:#64e45a"></i><b>84s</b><u>0.27</u></div>
<div class="g" style="left:938px;top:715px;width:83px;height:57px;"><i style="left:0.00%;width:97.05%;height:1.0px;background:#64e45a"></i><i style="left:97.00%;width:3.05%;height:1.0px;background:#0b93d1"></i><b>83s</b><u>0.06</u></div>
<div class="g" style="left:1022px;top:715px;width:83px;height:57px;"><i style="left:0.00%;width:2.05%;height:1.0px;background:#f06000"></i><i style="left:2.00%;width:93.05%;height:1.0px;background:#64e45a"></i><i style="left:95.00%;width:5.05%;height:1.0px;background:#0b93d1"></i><b>82s</b><u>0.05</u></div>
<div class="g" style="left:17px;top:773px;width:83px;height:57px;"><i style="left:0.00%;width:13.05%;height:22.0px;background:#6e0087"></i><i style="left:13.00%;width:87.05%;height:22.0px;background:#64e45a"></i><b>A7o</b><u>1.54</u></div>
<div class="g" style="left:101px;top:773px;width:83px;height:57px;"><i style="left:0.00%;width:34.55%;height:32.0px;background:#6e0087"></i><i style="left:34.50%;width:65.55%;height:32.0px;background:#64e45a"></i><b>K7o</b><u>0.23</u></div>
<div class="g" style="left:185px;top:773px;width:82px;height:57px;"><i style="left:0.00%;width:96.05%;height:23.0px;background:#64e45a"></i><i style="left:96.00%;width:4.05%;height:23.0px;background:#0b93d1"></i><b>Q7o</b><u>0.02</u></div>
<div class="g" style="left:268px;top:773px;width:83px;height:57px;"><i style="left:0.00%;width:6.05%;height:15.0px;background:#f06000"></i><i style="left:6.00%;width:50.05%;height:15.0px;background:#64e45a"></i><i style="left:56.00%;width:44.05%;height:15.0px;background:#0b93d1"></i><b>J7o</b><u>0</u></div>
<div class="g" style="left:352px;top:773px;width:83px;height:57px;"><i style="left:0.00%;width:4.05%;height:17.0px;background:#f06000"></i><i style="left:4.00%;width:84.05%;height:17.0px;background:#64e45a"></i><i style="left:88.00%;width:12.05%;height:17.0px;background:#0b93d1"></i><b>T7o</b><u>0.01</u></div>
<div class="g" style="left:436px;top:773px;width:83px;height:57px;"><i style="left:0.00%;width:3.55%;height:20.0px;background:#f06000"></i><i style="left:3.50%;width:95.05%;height:20.0px;background:#64e45a"></i><i style="left:98.50%;width:1.55%;height:20.0px;background:#0b93d1"></i><b>97o</b><u>0.05</u></div>
<div class="g" style="left:520px;top:773px;width:82px;height:57px;"><i style="left:0.00%;width:100.05%;height:27.0px;background:#64e45a"></i><b>87o</b><u>0.1</u></div>
<div class="g" style="left:603px;top:773px;width:83px;height:57px;"><i style="left:0.00%;width:26.05%;height:25.0px;background:#6e0087"></i><i style="left:26.00%;width:3.55%;height:25.0px;background:#f06000"></i><i style="left:29.50%;width:70.55%;height:25.0px;background:#64e45a"></i><b>77</b><u>2.94</u></div>
<div class="g" style="left:687px;top:773px;width:83px;height:57px;"><i style="left:0.00%;width:100.05%;height:25.0px;background:#64e45a"></i><b>76s</b><u>0.85</u></div>
<div class="g" style="left:771px;top:773px;width:83px;height:57px;"><i style="left:0.00%;width:100.05%;height:39.0px;background:#64e45a"></i><b>75s</b><u>0.69</u></div>
<div class="g" style="left:855px;top:773px;width:82px;height:57px;"><i style="left:0.00%;width:100.05%;height:25.0px;background:#64e45a"></i><b>74s</b><u>0.43</u></div>
<div class="g" style="left:938px;top:773px;width:83px;height:57px;"><i style="left:0.00%;width:100.05%;height:17.0px;background:#64e45a"></i><b>73s</b><u>0.16</u></div>
<div class="g" style="left:1022px;top:773px;width:83px;height:57px;"><i style="left:0.00%;width:100.05%;height:6.0px;background:#0b93d1"></i><b>72s</b><u>0</u></div>
<div class="g" style="left:17px;top:831px;width:83px;height:58px;"><i style="left:0.00%;width:10.05%;height:25.0px;background:#6e0087"></i><i style="left:10.00%;width:1.05%;height:25.0px;background:#f06000"></i><i style="left:11.00%;width:89.05%;height:25.0px;background:#64e45a"></i><b>A6o</b><u>1.28</u></div>
<div class="g" style="left:101px;top:831px;width:83px;height:58px;"><i style="left:0.00%;width:38.05%;height:36.0px;background:#6e0087"></i><i style="left:38.00%;width:62.05%;height:36.0px;background:#64e45a"></i><b>K6o</b><u>0.17</u></div>
<div class="g" style="left:185px;top:831px;width:82px;height:58px;"><i style="left:0.00%;width:3.05%;height:23.0px;background:#f06000"></i><i style="left:3.00%;width:83.05%;height:23.0px;background:#64e45a"></i><i style="left:86.00%;width:14.05%;height:23.0px;background:#0b93d1"></i><b>Q6o</b><u>0.02</u></div>
<div class="g" style="left:268px;top:831px;width:83px;height:58px;"><i style="left:0.00%;width:0.55%;height:34.0px;background:#64e45a"></i><i style="left:0.50%;width:99.55%;height:34.0px;background:#0b93d1"></i><b>J6o</b><u>0</u></div>
<div class="g" style="left:352px;top:831px;width:83px;height:58px;"><i style="left:0.00%;width:100.05%;height:28.0px;background:#0b93d1"></i><b>T6o</b><u>0</u></div>
<div class="g" style="left:436px;top:831px;width:83px;height:58px;"><i style="left:0.00%;width:1.05%;height:24.0px;background:#f06000"></i><i style="left:1.00%;width:99.05%;height:24.0px;background:#0b93d1"></i><b>96o</b><u>0</u></div>
<div class="g" style="left:520px;top:831px;width:82px;height:58px;"><i style="left:0.00%;width:1.05%;height:23.0px;background:#f06000"></i><i style="left:1.00%;width:15.05%;height:23.0px;background:#64e45a"></i><i style="left:16.00%;width:84.05%;height:23.0px;background:#0b93d1"></i><b>86o</b><u>0</u></div>
<div class="g" style="left:603px;top:831px;width:83px;height:58px;"><i style="left:0.00%;width:0.55%;height:33.0px;background:#f06000"></i><i style="left:0.50%;width:88.55%;height:33.0px;background:#64e45a"></i><i style="left:89.00%;width:11.05%;height:33.0px;background:#0b93d1"></i><b>76o</b><u>0.01</u></div>
<div class="g" style="left:687px;top:831px;width:83px;height:58px;"><i style="left:0.00%;width:100.05%;height:24.0px;background:#64e45a"></i><b>66</b><u>2.44</u></div>
<div class="g" style="left:771px;top:831px;width:83px;height:58px;"><i style="left:0.00%;width:100.05%;height:23.0px;background:#64e45a"></i><b>65s</b><u>0.83</u></div>
<div class="g" style="left:855px;top:831px;width:82px;height:58px;"><i style="left:0.00%;width:100.05%;height:43.0px;background:#64e45a"></i><b>64s</b><u>0.66</u></div>
<div class="g" style="left:938px;top:831px;width:83px;height:58px;"><i style="left:0.00%;width:100.05%;height:25.0px;background:#64e45a"></i><b>63s</b><u>0.39</u></div>
<div class="g" style="left:1022px;top:831px;width:83px;height:58px;"><i style="left:0.00%;width:3.05%;height:2.5px;background:#f06000"></i><i style="left:3.00%;width:95.05%;height:2.5px;background:#64e45a"></i><i style="left:98.00%;width:2.05%;height:2.5px;background:#0b93d1"></i><b>62s</b><u>0.1</u></div>
<div class="g" style="left:17px;top:890px;width:83px;height:58px;"><i style="left:0.00%;width:10.05%;height:20.5px;background:#6e0087"></i><i style="left:10.00%;width:90.05%;height:20.5px;background:#64e45a"></i><b>A5o</b><u>1.42</u></div>
<div class="g" style="left:101px;top:890px;width:83px;height:58px;"><i style="left:0.00%;width:11.55%;height:30.5px;background:#6e0087"></i><i style="left:11.50%;width:2.55%;height:30.5px;background:#f06000"></i><i style="left:14.00%;width:86.05%;height:30.5px;background:#64e45a"></i><b>K5o</b><u>0.07</u></div>
<div class="g" style="left:185px;top:890px;width:82px;height:58px;"><i style="left:0.00%;width:2.05%;height:23.5px;background:#f06000"></i><i style="left:2.00%;width:3.55%;height:23.5px;background:#64e45a"></i><i style="left:5.50%;width:94.55%;height:23.5px;background:#0b93d1"></i><b>Q5o</b><u>0</u></div>
<div class="g" style="left:268px;top:890px;width:83px;height:58px;"><i style="left:0.00%;width:100.05%;height:36.5px;background:#0b93d1"></i><b>J5o</b><u>0</u></div>
<div class="g" style="left:352px;top:890px;width:83px;height:58px;"><i style="left:0.00%;width:100.05%;height:45.5px;background:#0b93d1"></i><b>T5o</b><u>0</u></div>
<div class="g" style="left:436px;top:890px;width:83px;height:58px;"><i style="left:0.00%;width:100.05%;height:41.5px;background:#0b93d1"></i><b>95o</b><u>0</u></div>
<div class="g" style="left:520px;top:890px;width:82px;height:58px;"><i style="left:0.00%;width:100.05%;height:36.5px;background:#0b93d1"></i><b>85o</b><u>0</u></div>
<div class="g" style="left:603px;top:890px;width:83px;height:58px;"><i style="left:0.00%;width:0.55%;height:37.5px;background:#64e45a"></i><i style="left:0.50%;width:99.55%;height:37.5px;background:#0b93d1"></i><b>75o</b><u>0</u></div>
<div class="g" style="left:687px;top:890px;width:83px;height:58px;"><i style="left:0.00%;width:2.05%;height:31.5px;background:#f06000"></i><i style="left:2.00%;width:86.05%;height:31.5px;background:#64e45a"></i><i style="left:88.00%;width:12.05%;height:31.5px;background:#0b93d1"></i><b>65o</b><u>0.01</u></div>
<div class="g" style="left:771px;top:890px;width:83px;height:58px;"><i style="left:0.00%;width:100.05%;height:29.5px;background:#64e45a"></i><b>55</b><u>2.03</u></div>
<div class="g" style="left:855px;top:890px;width:82px;height:58px;"><i style="left:0.00%;width:100.05%;height:23.5px;background:#64e45a"></i><b>54s</b><u>0.82</u></div>
<div class="g" style="left:938px;top:890px;width:83px;height:58px;"><i style="left:0.00%;width:100.05%;height:46.5px;background:#64e45a"></i><b>53s</b><u>0.64</u></div>
<div class="g" style="left:1022px;top:890px;width:83px;height:58px;"><i style="left:0.00%;width:100.05%;height:26.5px;background:#64e45a"></i><b>52s</b><u>0.36</u></div>
<div class="g" style="left:17px;top:949px;width:83px;height:57px;"><i style="left:0.00%;width:31.05%;height:32.0px;background:#6e0087"></i><i style="left:31.00%;width:69.05%;height:32.0px;background:#64e45a"></i><b>A4o</b><u>1.28</u></div>
<div class="g" style="left:101px;top:949px;width:83px;height:57px;"><i style="left:0.00%;width:4.55%;height:26.0px;background:#f06000"></i><i style="left:4.50%;width:87.55%;height:26.0px;background:#64e45a"></i><i style="left:92.00%;width:8.05%;height:26.0px;background:#0b93d1"></i><b>K4o</b><u>0.02</u></div>
<div class="g" style="left:185px;top:949px;width:82px;height:57px;"><i style="left:0.00%;width:0.55%;height:36.0px;background:#f06000"></i><i style="left:0.50%;width:0.55%;height:36.0px;background:#64e45a"></i><i style="left:1.00%;width:99.05%;height:36.0px;background:#0b93d1"></i><b>Q4o</b><u>0</u></div>
<div class="g" style="left:268px;top:949px;width:83px;height:57px;"><i style="left:0.00%;width:100.05%;height:42.0px;background:#0b93d1"></i><b>J4o</b><u>0</u></div>
<div class="g" style="left:352px;top:949px;width:83px;height:57px;"><i style="left:0.00%;width:100.05%;height:46.0px;background:#0b93d1"></i><b>T4o</b><u>0</u></div>
<div class="g" style="left:436px;top:949px;width:83px;height:57px;"><i style="left:0.00%;width:100.05%;height:57px;background:#0b93d1"></i><b>94o</b><u>0</u></div>
<div class="g" style="left:520px;top:949px;width:82px;height:57px;"><i style="left:0.00%;width:100.05%;height:57px;background:#0b93d1"></i><b>84o</b><u>0</u></div>
<div class="g" style="left:603px;top:949px;width:83px;height:57px;"><i style="left:0.00%;width:100.05%;height:56.0px;background:#0b93d1"></i><b>74o</b><u>0</u></div>
<div class="g" style="left:687px;top:949px;width:83px;height:57px;"><i style="left:0.00%;width:100.05%;height:35.0px;background:#0b93d1"></i><b>64o</b><u>0</u></div>
<div class="g" style="left:771px;top:949px;width:83px;height:57px;"><i style="left:0.00%;width:1.05%;height:27.0px;background:#f06000"></i><i style="left:1.00%;width:91.05%;height:27.0px;background:#64e45a"></i><i style="left:92.00%;width:8.05%;height:27.0px;background:#0b93d1"></i><b>54o</b><u>0.01</u></div>
<div class="g" style="left:855px;top:949px;width:82px;height:57px;"><i style="left:0.00%;width:100.05%;height:28.0px;background:#64e45a"></i><b>44</b><u>1.7</u></div>
<div class="g" style="left:938px;top:949px;width:83px;height:57px;"><i style="left:0.00%;width:100.05%;height:37.0px;background:#64e45a"></i><b>43s</b><u>0.58</u></div>
<div class="g" style="left:1022px;top:949px;width:83px;height:57px;"><i style="left:0.00%;width:100.05%;height:24.0px;background:#64e45a"></i><b>42s</b><u>0.34</u></div>
<div class="g" style="left:17px;top:1007px;width:83px;height:58px;"><i style="left:0.00%;width:42.05%;height:40.5px;background:#6e0087"></i><i style="left:42.00%;width:58.05%;height:40.5px;background:#64e45a"></i><b>A3o</b><u>1.18</u></div>
<div class="g" style="left:101px;top:1007px;width:83px;height:58px;"><i style="left:0.00%;width:5.55%;height:29.5px;background:#f06000"></i><i style="left:5.50%;width:16.55%;height:29.5px;background:#64e45a"></i><i style="left:22.00%;width:78.05%;height:29.5px;background:#0b93d1"></i><b>K3o</b><u>-0.01</u></div>
<div class="g" style="left:185px;top:1007px;width:82px;height:58px;"><i style="left:0.00%;width:100.05%;height:46.5px;background:#0b93d1"></i><b>Q3o</b><u>0</u></div>
<div class="g" style="left:268px;top:1007px;width:83px;height:58px;"><i style="left:0.00%;width:100.05%;height:41.5px;background:#0b93d1"></i><b>J3o</b><u>0</u></div>
<div class="g" style="left:352px;top:1007px;width:83px;height:58px;"><i style="left:0.00%;width:100.05%;height:51.5px;background:#0b93d1"></i><b>T3o</b><u>0</u></div>
<div class="g" style="left:436px;top:1007px;width:83px;height:58px;"><i style="left:0.00%;width:100.05%;height:58px;background:#0b93d1"></i><b>93o</b><u>0</u></div>
<div class="g" style="left:520px;top:1007px;width:82px;height:58px;"><i style="left:0.00%;width:100.05%;height:58px;background:#0b93d1"></i><b>83o</b><u>0</u></div>
<div class="g" style="left:603px;top:1007px;width:83px;height:58px;"><i style="left:0.00%;width:100.05%;height:58px;background:#0b93d1"></i><b>73o</b><u>0</u></div>
<div class="g" style="left:687px;top:1007px;width:83px;height:58px;"><i style="left:0.00%;width:100.05%;height:58px;background:#0b93d1"></i><b>63o</b><u>0</u></div>
<div class="g" style="left:771px;top:1007px;width:83px;height:58px;"><i style="left:0.00%;width:100.05%;height:30.5px;background:#0b93d1"></i><b>53o</b><u>0</u></div>
<div class="g" style="left:855px;top:1007px;width:82px;height:58px;"><i style="left:0.00%;width:100.05%;height:32.5px;background:#0b93d1"></i><b>43o</b><u>0</u></div>
<div class="g" style="left:938px;top:1007px;width:83px;height:58px;"><i style="left:0.00%;width:100.05%;height:38.5px;background:#64e45a"></i><b>33</b><u>1.43</u></div>
<div class="g" style="left:1022px;top:1007px;width:83px;height:58px;"><i style="left:0.00%;width:100.05%;height:16.5px;background:#64e45a"></i><b>32s</b><u>0.28</u></div>
<div class="g" style="left:17px;top:1066px;width:83px;height:58px;border-bottom-left-radius:6px;"><i style="left:0.00%;width:47.05%;height:51.0px;background:#6e0087"></i><i style="left:47.00%;width:53.05%;height:51.0px;background:#64e45a"></i><b>A2o</b><u>1.06</u></div>
<div class="g" style="left:101px;top:1066px;width:83px;height:58px;"><i style="left:0.00%;width:1.05%;height:42.0px;background:#64e45a"></i><i style="left:1.00%;width:99.05%;height:42.0px;background:#0b93d1"></i><b>K2o</b><u>0</u></div>
<div class="g" style="left:185px;top:1066px;width:82px;height:58px;"><i style="left:0.00%;width:100.05%;height:50.0px;background:#0b93d1"></i><b>Q2o</b><u>0</u></div>
<div class="g" style="left:268px;top:1066px;width:83px;height:58px;"><i style="left:0.00%;width:100.05%;height:47.0px;background:#0b93d1"></i><b>J2o</b><u>0</u></div>
<div class="g" style="left:352px;top:1066px;width:83px;height:58px;"><i style="left:0.00%;width:100.05%;height:55.0px;background:#0b93d1"></i><b>T2o</b><u>0</u></div>
<div class="g" style="left:436px;top:1066px;width:83px;height:58px;"><i style="left:0.00%;width:100.05%;height:58px;background:#0b93d1"></i><b>92o</b><u>0</u></div>
<div class="g" style="left:520px;top:1066px;width:82px;height:58px;"><i style="left:0.00%;width:100.05%;height:58px;background:#0b93d1"></i><b>82o</b><u>0</u></div>
<div class="g" style="left:603px;top:1066px;width:83px;height:58px;"><i style="left:0.00%;width:100.05%;height:58px;background:#0b93d1"></i><b>72o</b><u>0</u></div>
<div class="g" style="left:687px;top:1066px;width:83px;height:58px;"><i style="left:0.00%;width:100.05%;height:58px;background:#0b93d1"></i><b>62o</b><u>0</u></div>
<div class="g" style="left:771px;top:1066px;width:83px;height:58px;"><i style="left:0.00%;width:100.05%;height:52.0px;background:#0b93d1"></i><b>52o</b><u>0</u></div>
<div class="g" style="left:855px;top:1066px;width:82px;height:58px;"><i style="left:0.00%;width:100.05%;height:49.0px;background:#0b93d1"></i><b>42o</b><u>0</u></div>
<div class="g" style="left:938px;top:1066px;width:83px;height:58px;"><i style="left:0.00%;width:100.05%;height:58px;background:#0b93d1"></i><b>32o</b><u>0</u></div>
<div class="g" style="left:1022px;top:1066px;width:83px;height:58px;border-bottom-right-radius:6px;"><i style="left:0.00%;width:100.05%;height:35.0px;background:#64e45a"></i><b>22</b><u>1.23</u></div>
<div class="abs" style="left:1123px;top:328px;width:109px;height:32px;background:#1e1e1e;border-radius:8px 8px 0 0"></div>
<div class="abs" style="left:1232px;top:350px;width:8px;height:8px;background:radial-gradient(circle at 100% 0,transparent 8px,#1e1e1e 8.5px)"></div>
<div class="t" style="left:1143px;top:336px;font-size:15.8px;color:#fff;-webkit-text-stroke:.35px #fff;letter-spacing:.2px;margin-top:1.3px">Overview</div>
<div class="t" style="left:1256px;top:336px;font-size:15.8px;color:#ababab;-webkit-text-stroke:.25px #ababab;letter-spacing:.3px;margin-top:1.3px">Table</div>
<div class="t" style="left:1339px;top:336px;font-size:15.8px;color:#ababab;-webkit-text-stroke:.25px #ababab;letter-spacing:.3px;margin-top:1.3px">Equity chart</div>
<div class="abs" style="left:1123px;top:358px;width:786px;height:53px;background:#1e1e1e;border-radius:0 8px 8px 8px"></div>
<div class="abs" style="left:1128px;top:364px;width:62px;height:41px;border-radius:5px;background:#262626"></div>
<div class="abs" style="left:1193.500px;top:364px;width:61.500px;height:41px;border-radius:5px;background:#262626"></div>
<div class="t b" style="left:1128px;width:62px;text-align:center;top:366px;font-size:17px;letter-spacing:-.4px;color:#fff">BB</div>
<div class="t b" style="left:1128px;width:62px;text-align:center;top:383px;font-size:17px;letter-spacing:-.2px;color:#d0d0d0">35</div>
<div class="t b" style="left:1193.500px;width:61.500px;text-align:center;top:366px;font-size:17px;letter-spacing:-.4px;color:#15b597">SB</div>
<div class="t b" style="left:1193.500px;width:61.500px;text-align:center;top:383px;font-size:17px;letter-spacing:-.2px;color:#15b597">39</div>
<div class="t b" style="left:1284px;top:366px;font-size:16.5px;letter-spacing:-.35px;color:#fff">6 BB</div>
<div class="t b" style="left:1327px;top:366px;font-size:16.5px;letter-spacing:-.35px;color:#b0b0b0">2.5 BB</div>
<div class="t" style="left:1273px;top:389.500px;font-size:13.5px;color:#a8a8a8">Pot odds:</div>
<div class="t b" style="left:1337px;top:387px;font-size:16.8px;letter-spacing:-.2px;color:#d0d0d0">33.3%</div>
<div class="abs" style="left:1123px;top:422px;width:112px;height:32px;background:#1e1e1e;border-radius:8px 8px 0 0"></div>
<div class="abs" style="left:1235px;top:444px;width:8px;height:8px;background:radial-gradient(circle at 100% 0,transparent 8px,#1e1e1e 8.5px)"></div>
<div class="t" style="left:1143px;top:430px;font-size:15.8px;color:#fff;-webkit-text-stroke:.35px #fff;letter-spacing:.2px;margin-top:1.3px">Actions</div>
<svg class="abs" style="left:1208px;top:435px" width="10" height="6" viewBox="0 0 10 6"><path d="M0 0h10L5 5.500z" fill="#fff"/></svg>
<div class="abs" style="left:1123px;top:452px;width:786px;height:204px;background:#1e1e1e;border-radius:0 8px 8px 8px"></div>
<div class="act" style="left:1128px;top:458px;width:385px;height:78px;background:#6e0087"><div class="n" style="letter-spacing:1.2px">Allin 39</div><div class="p" style="letter-spacing:0.6px">6.5%</div><div class="c"><span>51.7</span>combos</div></div>
<div class="act" style="left:1518px;top:458px;width:386px;height:78px;background:#f06000"><div class="n" style="letter-spacing:0.5px">Raise 10</div><div class="p" style="letter-spacing:0.1px">1.2%</div><div class="c"><span>9.6</span>combos</div></div>
<div class="act" style="left:1128px;top:541px;width:385px;height:79px;background:#64e45a"><div class="n" style="letter-spacing:1.6px">Call</div><div class="p" style="letter-spacing:1.2px">46.9%</div><div class="c"><span>372.66</span>combos</div></div>
<div class="act" style="left:1518px;top:541px;width:386px;height:79px;background:#0b93d1"><div class="n" style="letter-spacing:1.6px">Fold</div><div class="p" style="letter-spacing:1.0px">45.4%</div><div class="c"><span>360.15</span>combos</div></div>
<div class="abs" style="left:1128px;top:624px;width:776px;height:26px;border-radius:4px;overflow:hidden;background:#0b93d1">
<div class="abs" style="left:0;top:0;width:51px;height:26px;background:#6e0087"></div>
<div class="abs" style="left:51px;top:0;width:8.900px;height:26px;background:#f06000"></div>
<div class="abs" style="left:59.900px;top:0;width:364.400px;height:26px;background:#64e45a"></div>
</div>
<div class="abs" style="left:1123px;top:667px;width:86px;height:32px;background:#1e1e1e;border-radius:8px 8px 0 0"></div>
<div class="abs" style="left:1209px;top:689px;width:8px;height:8px;background:radial-gradient(circle at 100% 0,transparent 8px,#1e1e1e 8.5px)"></div>
<div class="t" style="left:1143px;top:675px;font-size:15.8px;color:#fff;-webkit-text-stroke:.35px #fff;letter-spacing:.2px;margin-top:1.3px">Hands</div>
<div class="t" style="left:1233px;top:675px;font-size:15.8px;color:#ababab;-webkit-text-stroke:.25px #ababab;letter-spacing:.3px;margin-top:1.3px">Summary</div>
<div class="t" style="left:1347px;top:675px;font-size:15.8px;color:#ababab;-webkit-text-stroke:.25px #ababab;letter-spacing:.3px;margin-top:1.3px">Filters</div>
<div class="t" style="left:1469px;top:675px;font-size:15.8px;color:#ababab;-webkit-text-stroke:.25px #ababab;letter-spacing:.3px;margin-top:1.3px">Blockers</div>
<div class="abs" style="left:1406.0px;top:676.0px;width:13px;height:13px"><svg width="13" height="13" viewBox="0 0 24 24" fill="#6a6a6a" ><path d="M4 8H2v12c0 1.1.9 2 2 2h12v-2H4V8zm16-6H8c-1.1 0-2 .9-2 2v12c0 1.1.9 2 2 2h12c1.1 0 2-.9 2-2V4c0-1.1-.9-2-2-2zm0 14H8V4h12v12z"/></svg></div>
<div class="abs" style="left:1123px;top:697px;width:786px;height:434px;background:#1e1e1e;border-radius:0 8px 8px 8px"></div>
<div class="abs" style="left:1129px;top:704px;width:774.2px;height:420px;background:#161616;border-radius:4px"></div>
<div class="hc" style="left:1129.0px;top:704.0px;border-top-left-radius:4px;"><div class="lab"><span style="color:#4a4a4a">A<em>♠</em></span><span style="color:#8e0d0d">A<em>♥</em></span></div><div class="ev">EV</div><div class="rows" style="bottom:2.2px"><div><span style="letter-spacing:.45px">Allin 39</span><span class="v"><span class="o">1</span><span class="o">1</span>.<span class="o">1</span>8</span></div><div><span style="letter-spacing:-.6px">Raise <span class="o">1</span>0</span><span class="v"><span class="o">1</span>4.8</span></div><div><span style="letter-spacing:-.7px">Call</span><span class="v"><span class="o">1</span>4.52</span></div><div><span style="letter-spacing:-.9px">Fold</span><span class="v">0</span></div></div></div>
<div class="hc" style="left:1387.4px;top:704.0px;"><div class="lab"><span style="color:#4a4a4a">A<em>♠</em></span><span style="color:#2230c8">A<em>♦</em></span></div><div class="ev">EV</div><div class="rows" style="bottom:2.2px"><div><span style="letter-spacing:.45px">Allin 39</span><span class="v"><span class="o">1</span><span class="o">1</span>.<span class="o">1</span>8</span></div><div><span style="letter-spacing:-.6px">Raise <span class="o">1</span>0</span><span class="v"><span class="o">1</span>4.8</span></div><div><span style="letter-spacing:-.7px">Call</span><span class="v"><span class="o">1</span>4.52</span></div><div><span style="letter-spacing:-.9px">Fold</span><span class="v">0</span></div></div></div>
<div class="hc" style="left:1645.8px;top:704.0px;border-top-right-radius:4px;"><div class="lab"><span style="color:#8e0d0d">A<em>♥</em></span><span style="color:#2230c8">A<em>♦</em></span></div><div class="ev">EV</div><div class="rows" style="bottom:2.2px"><div><span style="letter-spacing:.45px">Allin 39</span><span class="v"><span class="o">1</span><span class="o">1</span>.<span class="o">1</span>8</span></div><div><span style="letter-spacing:-.6px">Raise <span class="o">1</span>0</span><span class="v"><span class="o">1</span>4.8</span></div><div><span style="letter-spacing:-.7px">Call</span><span class="v"><span class="o">1</span>4.52</span></div><div><span style="letter-spacing:-.9px">Fold</span><span class="v">0</span></div></div></div>
<div class="hc" style="left:1129.0px;top:914.5px;border-bottom:1.5px solid #e8701a;border-bottom-left-radius:4px;"><div class="lab"><span style="color:#4a4a4a">A<em>♠</em></span><span style="color:#179c2c">A<em>♣</em></span></div><div class="ev">EV</div><div class="rows" style="bottom:1.4px"><div><span style="letter-spacing:.45px">Allin 39</span><span class="v"><span class="o">1</span><span class="o">1</span>.<span class="o">1</span>8</span></div><div><span style="letter-spacing:-.6px">Raise <span class="o">1</span>0</span><span class="v"><span class="o">1</span>4.8</span></div><div><span style="letter-spacing:-.7px">Call</span><span class="v"><span class="o">1</span>4.52</span></div><div><span style="letter-spacing:-.9px">Fold</span><span class="v">0</span></div></div></div>
<div class="hc" style="left:1387.4px;top:914.5px;border-bottom:1.5px solid #e8701a;"><div class="lab"><span style="color:#8e0d0d">A<em>♥</em></span><span style="color:#179c2c">A<em>♣</em></span></div><div class="ev">EV</div><div class="rows" style="bottom:1.4px"><div><span style="letter-spacing:.45px">Allin 39</span><span class="v"><span class="o">1</span><span class="o">1</span>.<span class="o">1</span>8</span></div><div><span style="letter-spacing:-.6px">Raise <span class="o">1</span>0</span><span class="v"><span class="o">1</span>4.8</span></div><div><span style="letter-spacing:-.7px">Call</span><span class="v"><span class="o">1</span>4.52</span></div><div><span style="letter-spacing:-.9px">Fold</span><span class="v">0</span></div></div></div>
<div class="hc" style="left:1645.8px;top:914.5px;border-bottom:1.5px solid #e8701a;border-bottom-right-radius:4px;"><div class="lab"><span style="color:#2230c8">A<em>♦</em></span><span style="color:#179c2c">A<em>♣</em></span></div><div class="ev">EV</div><div class="rows" style="bottom:1.4px"><div><span style="letter-spacing:.45px">Allin 39</span><span class="v"><span class="o">1</span><span class="o">1</span>.<span class="o">1</span>8</span></div><div><span style="letter-spacing:-.6px">Raise <span class="o">1</span>0</span><span class="v"><span class="o">1</span>4.8</span></div><div><span style="letter-spacing:-.7px">Call</span><span class="v"><span class="o">1</span>4.52</span></div><div><span style="letter-spacing:-.9px">Fold</span><span class="v">0</span></div></div></div>
</body></html>
